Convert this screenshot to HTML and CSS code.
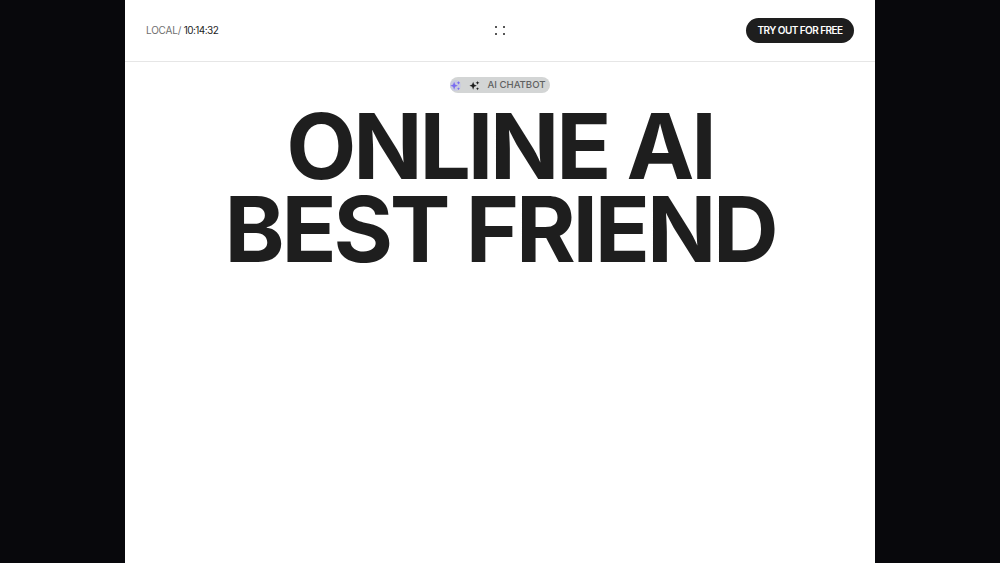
FILE: index.html
```html
<!DOCTYPE html>
<html lang="en">
<head>
    <meta charset="UTF-8">
    <meta name="viewport" content="width=device-width, initial-scale=1.0">
    <title>Online AI Best Friend</title>
    <link rel="stylesheet" href="styles.css">
</head>
<body>
    <div class="page">
        <header class="topbar">
            <div class="clock"><span class="clock-label">LOCAL/</span> <span class="clock-time">10:14:32</span></div>
            <div class="dots">
                <span></span><span></span><span></span><span></span>
            </div>
            <a class="try-btn" href="#">TRY OUT FOR FREE</a>
        </header>
        <main class="hero">
            <div class="tag">
                <svg class="spark spark-purple" viewBox="0 0 12 12"><path d="M4.5 2 L5.6 5 L8.5 6.2 L5.6 7.4 L4.5 10.5 L3.4 7.4 L0.5 6.2 L3.4 5 Z"/><path d="M9.3 1 L9.9 2.5 L11.4 3.1 L9.9 3.7 L9.3 5.2 L8.7 3.7 L7.2 3.1 L8.7 2.5 Z"/><path d="M9.3 7.8 L9.8 9 L11 9.5 L9.8 10 L9.3 11.2 L8.8 10 L7.6 9.5 L8.8 9 Z"/></svg>
                <svg class="spark" viewBox="0 0 12 12"><path d="M4.5 2 L5.6 5 L8.5 6.2 L5.6 7.4 L4.5 10.5 L3.4 7.4 L0.5 6.2 L3.4 5 Z"/><path d="M9.3 1 L9.9 2.5 L11.4 3.1 L9.9 3.7 L9.3 5.2 L8.7 3.7 L7.2 3.1 L8.7 2.5 Z"/><path d="M9.3 7.8 L9.8 9 L11 9.5 L9.8 10 L9.3 11.2 L8.8 10 L7.6 9.5 L8.8 9 Z"/></svg>
                <span class="tag-text">AI CHATBOT</span>
            </div>
            <h1>ONLINE AI<br>BEST FRIEND</h1>
        </main>
    </div>
</body>
</html>
```

FILE: styles.css
```css
body {
    margin: 0;
    height: 563px;
    overflow: hidden;
    background-color: #08080c;
    font-family: Inter, "Liberation Sans", sans-serif;
    color: #1e1e1e;
}
.page {
    width: 750px;
    height: 563px;
    margin: 0 auto;
    background-color: #fff;
}
.topbar {
    height: 61px;
    padding: 0 21px;
    border-bottom: 1px solid #e6e6e6;
    display: grid;
    grid-template-columns: 1fr auto 1fr;
    align-items: center;
}
.clock {
    padding-bottom: 1px;
    font-size: 10px;
    letter-spacing: -0.2px;
}
.clock-label {
    color: #6f6f6f;
}
.clock-time {
    letter-spacing: -0.55px;
}
.dots {
    display: grid;
    grid-template-columns: 2px 2px;
    gap: 5px 6px;
}
.dots span {
    width: 2px;
    height: 2px;
    border-radius: 50%;
    background-color: #1e1e1e;
}
.try-btn {
    justify-self: end;
    box-sizing: border-box;
    height: 25px;
    padding: 0 11.5px 1px;
    display: flex;
    align-items: center;
    border-radius: 13px;
    background-color: #1e1e1e;
    color: #fff;
    font-size: 10px;
    font-weight: 600;
    letter-spacing: -0.55px;
    text-decoration: none;
}
.hero {
    display: flex;
    flex-direction: column;
    align-items: center;
    padding-top: 15px;
}
.tag {
    height: 16px;
    padding-right: 4px;
    display: flex;
    align-items: center;
    border-radius: 8px;
    background-color: #d3d5d5;
}
.spark {
    width: 11px;
    height: 11px;
    fill: #1e1e1e;
    margin-left: 8px;
}
.spark-purple {
    fill: #7a6cf0;
    margin-left: 0;
    background-color: #c9cbe0;
    border-radius: 50%;
}
.tag-text {
    margin-left: 7px;
    padding-bottom: 1px;
    font-size: 9.6px;
    font-weight: 500;
    color: #5f6161;
}
h1 {
    margin: 12px 0 0;
    text-align: center;
    font-size: 91px;
    line-height: 83px;
    font-weight: 700;
    letter-spacing: -3.2px;
    color: #1e1e1e;
}
```
